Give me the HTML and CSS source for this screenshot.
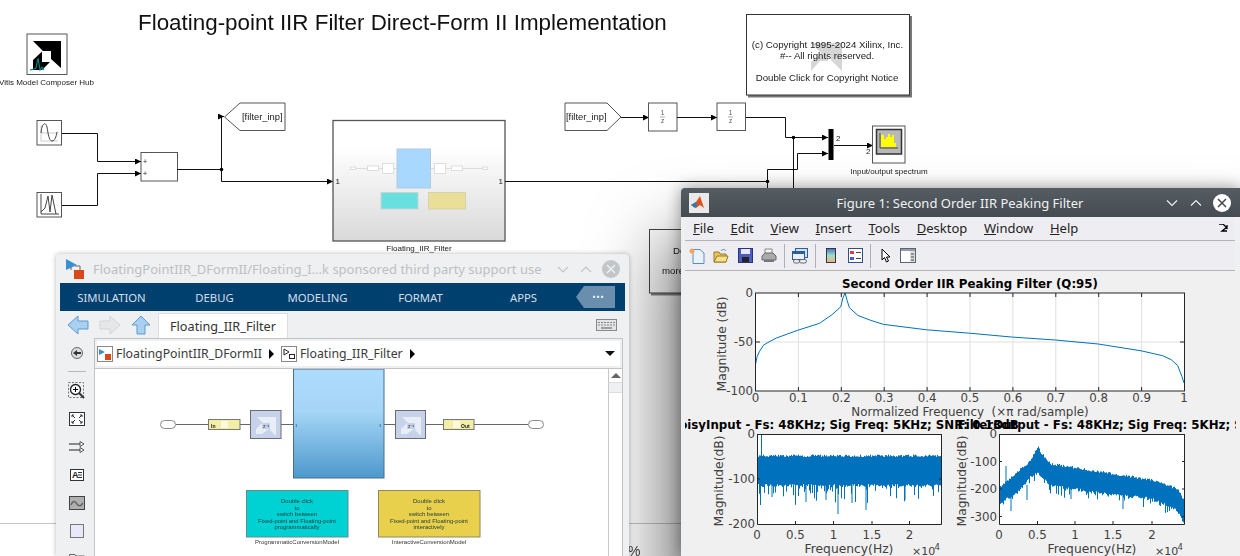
FILE: index.html
```html
<!DOCTYPE html>
<html lang="en">
<head>
<meta charset="utf-8">
<title>Floating-point IIR Filter Direct-Form II Implementation</title>
<link rel="stylesheet" href="styles.css">
</head>
<body>
<main class="desktop">
  <svg class="diagram" width="1240" height="556" viewBox="0 0 1240 556">
    <defs>
      <linearGradient id="subGrad" x1="0" y1="0" x2="0" y2="1">
        <stop offset="0" stop-color="#fff"/><stop offset=".22" stop-color="#fff"/><stop offset="1" stop-color="#d9d9d9"/>
      </linearGradient>
      <marker id="arw" markerWidth="7" markerHeight="6" refX="6" refY="3" orient="auto" markerUnits="userSpaceOnUse"><path d="M0 0L6 3L0 6Z" fill="#000"/></marker>
    </defs>
    <text class="d-title" x="138" y="30">Floating-point IIR Filter Direct-Form II Implementation</text>

    <rect class="blk" x="27" y="34" width="40" height="40.500"/>
    <path d="M33 41H61V68L51 59V51H43Z" fill="#000"/>
    <path d="M42 51.500L33 60V70H42L50 62H42Z" fill="#000"/>
    <path class="teal" d="M30 70L34 69L36 68L38 58L40 70L42 67L44 70"/>
    <text class="d-s" x="46.500" y="85" text-anchor="middle">Vitis Model Composer Hub</text>

    <rect class="blk" x="37" y="120.500" width="24.500" height="24.500"/>
    <path class="ico-soft" d="M41 125V141H58M41 133H58"/>
    <path class="ico" d="M41 133C42 122 46 122 47 127C48 133 49 141 52 141C55 141 56 137 57 132"/>
    <rect class="blk" x="37" y="192.500" width="24.500" height="24.500"/>
    <path class="ico" d="M41 194V214H59M41 212L45 208L48 196L50 212L52 195L56 214"/>

    <rect class="blk" x="141" y="152.500" width="36.500" height="28.500"/>
    <text class="d-p" x="143" y="164">+</text><text class="d-p" x="143" y="176">+</text>
    <path class="wire" marker-end="url(#arw)" d="M62 133.500H97.500V161.500H141"/>
    <path class="wire" marker-end="url(#arw)" d="M62 205.500H97.500V173.500H141"/>
    <path class="wire" marker-end="url(#arw)" d="M177 169.500H221.500V116.500H224"/>
    <path class="wire" marker-end="url(#arw)" d="M221.500 169.500V181.500H333"/>
    <circle cx="221.500" cy="169.500" r="1.800"/>
    <path class="blk" d="M224.500 117L240 103H285V130.500H240Z"/>
    <text class="d-m" x="242" y="120">[filter_inp]</text>

    <rect x="333" y="120.500" width="172" height="120.500" fill="url(#subGrad)" class="sub"/>
    <path class="thin" d="M350 168.500H367M379 168.500H382M393 168.500H397M431 168.500H434M446 168.500H451M463 168.500H483"/>
    <rect class="thin-b" x="350.500" y="167" width="5" height="2.500"/>
    <rect class="thin-b" x="367.500" y="166" width="11" height="4.500"/>
    <rect class="thin-b" x="382.500" y="163.500" width="11" height="10"/>
    <rect class="thin-b" x="434.500" y="163.500" width="11" height="10"/>
    <rect class="thin-b" x="451.500" y="166" width="11" height="4.500"/>
    <rect class="thin-b" x="482.500" y="167" width="5" height="2.500"/>
    <rect x="397" y="149" width="33.500" height="39" fill="#a8d8fe" stroke="#b2c9dc"/>
    <rect x="381" y="192.500" width="37" height="16.500" fill="#68e0e0" stroke="#c8d4d4"/>
    <rect x="428.500" y="192.500" width="37" height="16.500" fill="#eadf98" stroke="#d8d2a8"/>
    <text class="d-s" x="335.500" y="184">1</text><text class="d-s" x="498.500" y="184">1</text>
    <text class="d-s" x="419" y="250.500" text-anchor="middle">Floating_IIR_Filter</text>

    <path class="blk" d="M565 103H607L621 117L607 130.500H565Z"/>
    <text class="d-m" x="566" y="120">[filter_inp]</text>
    <path class="wire" marker-end="url(#arw)" d="M621 117.500H649"/>
    <rect class="blk" x="648.500" y="103" width="28.500" height="28"/>
    <text class="d-f" x="662.500" y="114.500" text-anchor="middle">1</text><path class="frac" d="M660 117H665"/><text class="d-f" x="662.500" y="123" text-anchor="middle">z</text>
    <path class="wire" marker-end="url(#arw)" d="M677 117.500H717"/>
    <rect class="blk" x="717" y="103" width="28.500" height="27.500"/>
    <text class="d-f" x="730.500" y="114.500" text-anchor="middle">1</text><path class="frac" d="M728 117H733"/><text class="d-f" x="730.500" y="123" text-anchor="middle">z</text>
    <path class="wire" marker-end="url(#arw)" d="M746 117.500H785.500V137.500H828"/>
    <path class="wire" d="M793.500 137.500V195"/>
    <circle cx="793.500" cy="137.500" r="1.800"/>
    <path class="wire" d="M505 181.500H768"/>
    <path class="wire" marker-end="url(#arw)" d="M767.500 195V169.500H797.500V153.500H828"/>
    <circle cx="767.500" cy="181.500" r="1.800"/>
    <rect x="828.500" y="129" width="5" height="31" fill="#000"/>
    <text class="d-s" x="836" y="141">2</text>
    <path class="wire" marker-end="url(#arw)" d="M834 145.500H873"/>
    <text class="d-s" x="866" y="154">2</text>
    <rect class="blk" x="872.500" y="126" width="32.500" height="37"/>
    <rect x="876.500" y="129.500" width="25" height="24.500" fill="#b8b8b8" stroke="#333" stroke-width="1.500"/>
    <path d="M881 147V134H882V135H884V139H886V137H888V134H890V137H892V135H894V143H896V147Z" fill="#ff0"/>
    <path class="ico" d="M880 133V148H898"/>
    <text class="d-s" x="889" y="174" text-anchor="middle">Input/output spectrum</text>

    <rect class="note" x="746.500" y="14.500" width="163" height="80.500"/>
    <path d="M811 43H842V71L831 60V54H822Z" fill="#d6d6d6"/>
    <path d="M820 55H828V61H820L811 71V62Z" fill="#d6d6d6"/>
    <text class="d-n" x="827.500" y="48" text-anchor="middle">(c) Copyright 1995-2024 Xilinx, Inc.</text>
    <text class="d-n" x="827" y="59" text-anchor="middle">#-- All rights reserved.</text>
    <text class="d-n" x="827" y="81" text-anchor="middle">Double Click for Copyright Notice</text>

    <rect class="note2" x="649.500" y="229.500" width="60" height="63.500"/>
    <text class="d-n" x="673" y="254">De</text>
    <text class="d-n" x="662" y="274">more</text>

    <path class="status" d="M0 523.500H60M629 523.500H690"/>
    <text class="d-pct" x="628" y="556">%</text>
  </svg>

  <section class="win win-model">
    <header class="titlebar">
      <svg class="app-ico" width="22" height="22" viewBox="0 0 22 22"><path d="M1 1L12 7L1 12Z" fill="#3a8fd0"/><path d="M6 9V12M10 8H15V12" fill="none" stroke="#666"/><rect x="9" y="12" width="10" height="9" fill="#d8481a"/></svg>
      <h1 class="title">FloatingPointIIR_DFormII/Floating_I...k sponsored third party support use</h1>
      <div class="winbtns">
        <svg width="14" height="14" viewBox="0 0 14 14"><path class="wb" d="M2 5L7 10L12 5"/></svg>
        <svg width="14" height="14" viewBox="0 0 14 14"><path class="wb" d="M2 10L7 5L12 10"/></svg>
        <svg width="18" height="18" viewBox="0 0 18 18"><circle cx="9" cy="9" r="9" fill="#c3c6c9"/><path d="M5 5L13 13M13 5L5 13" stroke="#eff0f1" stroke-width="1.500"/></svg>
      </div>
    </header>
    <nav class="ribbon">
      <span class="rtab">SIMULATION</span><span class="rtab">DEBUG</span><span class="rtab">MODELING</span><span class="rtab">FORMAT</span><span class="rtab">APPS</span>
      <span class="rmore">•••</span>
    </nav>
    <div class="navrow">
      <svg width="22" height="20" viewBox="0 0 22 20"><path class="arrow-on" d="M1 10L11 1V6H21V14H11V19Z"/></svg>
      <svg width="22" height="20" viewBox="0 0 22 20"><path class="arrow-off" d="M21 10L11 1V6H1V14H11V19Z"/></svg>
      <svg width="20" height="20" viewBox="0 0 20 20"><path class="arrow-on" d="M10 1L19 10H14V19H6V10H1Z"/></svg>
      <div class="doc-tab">Floating_IIR_Filter</div>
      <svg class="kbd" width="21" height="12" viewBox="0 0 21 12"><rect x=".5" y=".5" width="20" height="11" fill="#e4e4e4" stroke="#888"/><path d="M2 3.500H19M2 6H19" stroke="#888" stroke-dasharray="2 1"/><path d="M5 9H16" stroke="#888" stroke-width="1.500"/></svg>
    </div>
    <div class="modelbody">
      <aside class="lefttools">
        <svg class="first" width="14" height="14" viewBox="0 0 14 14"><circle cx="7" cy="7" r="5.500" fill="#ddd" stroke="#666"/><path d="M3 7L7 4V10ZM7 6H11V8H7Z" fill="#333"/></svg>
        <hr class="tsep">
        <span class="lt"><svg width="18" height="18" viewBox="0 0 18 18"><rect x=".5" y=".5" width="15" height="15" fill="none" stroke="#777" stroke-dasharray="2 1.500"/><circle cx="7.500" cy="7.500" r="5" fill="#fff" stroke="#222" stroke-width="1.300"/><path d="M5 7.500H10M7.500 5V10" stroke="#000"/><path d="M11 11L16 16" stroke="#333" stroke-width="2"/></svg></span>
        <span class="lt"><svg width="16" height="14" viewBox="0 0 16 14"><rect x=".5" y=".5" width="15" height="13" fill="#fff" stroke="#333"/><path d="M3 5V3H5M13 5V3H11M3 9V11H5M13 9V11H11M3 3L6 6M13 3L10 6M3 11L6 8M13 11L10 8" fill="none" stroke="#333"/></svg></span>
        <span class="lt"><svg width="16" height="12" viewBox="0 0 16 12"><path d="M0 3H11M0 9H11" stroke="#222"/><path d="M11 .5L15 3L11 5.500ZM11 6.500L15 9L11 11.500Z" fill="#fff" stroke="#555"/></svg></span>
        <span class="lt"><svg width="14" height="12" viewBox="0 0 14 12"><rect x=".5" y=".5" width="13" height="11" fill="#fff" stroke="#333"/><text class="ai" x="2" y="9">A</text><path d="M8 3.500H12M8 6H12M8 8.500H12" stroke="#333"/></svg></span>
        <span class="lt"><svg width="16" height="14" viewBox="0 0 16 14"><rect x=".5" y=".5" width="15" height="13" fill="#b0b0b0" stroke="#444"/><path d="M2 9C4 4 6 5 8 8C10 11 12 10 14 7" fill="none" stroke="#666" stroke-width="1.500"/></svg></span>
        <span class="lt"><svg width="14" height="14" viewBox="0 0 14 14"><rect x=".5" y=".5" width="13" height="13" fill="#e8e8fa" stroke="#777"/></svg></span>
        <span class="lt"><svg width="16" height="12" viewBox="0 0 16 12"><path d="M.5 11.500V1.500H6L7 3H15.500V11.500Z" fill="#eee" stroke="#666"/></svg></span>
      </aside>
      <div class="modelmain">
        <div class="address">
          <svg width="16" height="16" viewBox="0 0 16 16"><rect x=".5" y=".5" width="15" height="15" fill="#fff" stroke="#888"/><path d="M2 3L8 6L2 9Z" fill="#3a8fd0"/><rect x="8" y="8" width="6" height="6" fill="#d8481a"/></svg>
          <span class="crumb">FloatingPointIIR_DFormII</span>
          <i class="tri"></i>
          <svg width="16" height="16" viewBox="0 0 16 16"><rect x=".5" y=".5" width="15" height="15" fill="#fff" stroke="#888"/><path d="M3 3L8 6L3 9Z" fill="#fff" stroke="#222"/><rect x="8.500" y="8.500" width="5" height="4" fill="#fff" stroke="#222"/></svg>
          <span class="crumb">Floating_IIR_Filter</span>
          <i class="tri"></i>
          <i class="drop"></i>
        </div>
        <div class="viewport">
          <svg class="inner" width="513" height="187" viewBox="95 369 513 187">
            <defs>
              <linearGradient id="bigGrad" x1="0" y1="0" x2="0" y2="1"><stop offset="0" stop-color="#aedcff"/><stop offset=".4" stop-color="#a4d4f6"/><stop offset="1" stop-color="#4c98cc"/></linearGradient>
            </defs>
            <path class="iw" d="M176 424.500H208M240 424.500H250M281 424.500H293M384 424.500H395M425 424.500H443M474 424.500H528"/>
            <rect class="pill" x="160.500" y="420.500" width="15" height="8" rx="4"/>
            <rect class="pill" x="528.500" y="420.500" width="15" height="8" rx="4"/>
            <rect class="gw" x="208.500" y="419.500" width="31.500" height="10"/>
            <rect class="gw2" x="221" y="421" width="7" height="7"/>
            <text class="i-b" x="211" y="428">In</text>
            <rect class="gw" x="443.500" y="419.500" width="30.500" height="10"/>
            <rect class="gw2" x="453" y="421" width="7" height="7"/>
            <text class="i-b" x="461" y="428">Out</text>
            <rect class="dsp" x="250.500" y="410.500" width="30.500" height="28"/>
            <path class="dspw" d="M257 417H276V436L270 430V423H263ZM262 423L256 429V434H262L269 429H262Z"/>
            <text class="i-x" x="263" y="428">z⁻¹</text>
            <rect class="dsp" x="395.500" y="410.500" width="30" height="28"/>
            <path class="dspw" d="M402 417H421V436L415 430V423H408ZM407 423L401 429V434H407L414 429H407Z"/>
            <text class="i-x" x="408" y="428">z⁻¹</text>
            <rect x="293.500" y="369" width="90.500" height="109" fill="url(#bigGrad)" stroke="#4a6f8c"/>
            <text class="i-p" x="295" y="427">1</text><text class="i-p" x="379" y="427">1</text>
            <rect class="cy" x="246.500" y="490.500" width="101.500" height="46.500"/>
            <text class="i-t" x="297" y="503" text-anchor="middle">Double click</text>
            <text class="i-t" x="297" y="510" text-anchor="middle">to</text>
            <text class="i-t" x="297" y="516" text-anchor="middle">switch between</text>
            <text class="i-t" x="297" y="523" text-anchor="middle">Fixed-point and Floating-point</text>
            <text class="i-t" x="297" y="529" text-anchor="middle">programmatically</text>
            <text class="i-l" x="297" y="544" text-anchor="middle">ProgrammaticConversionModel</text>
            <rect class="ye" x="378.500" y="490.500" width="101.500" height="46.500"/>
            <text class="i-t" x="429" y="503" text-anchor="middle">Double click</text>
            <text class="i-t" x="429" y="510" text-anchor="middle">to</text>
            <text class="i-t" x="429" y="516" text-anchor="middle">switch between</text>
            <text class="i-t" x="429" y="523" text-anchor="middle">Fixed-point and Floating-point</text>
            <text class="i-t" x="429" y="529" text-anchor="middle">interactively</text>
            <text class="i-l" x="429" y="544" text-anchor="middle">InteractiveConversionModel</text>
          </svg>
          <div class="scrollbar"><i class="sb-up"></i><i class="sb-thumb"></i></div>
        </div>
      </div>
    </div>
  </section>

  <section class="win win-fig">
    <header class="figtitle">
      <svg class="fig-ico" width="20" height="20" viewBox="0 0 20 20"><rect width="20" height="20" fill="#e9e9e9"/><path d="M2 12L7 9L11 3L15 15L11 12L7 15Z" fill="#d9541e"/><path d="M2 12L7 9L8 13L6 15Z" fill="#2b7bb9"/></svg>
      <h2 class="figname">Figure 1: Second Order IIR Peaking Filter</h2>
      <div class="figbtns">
        <svg width="14" height="14" viewBox="0 0 14 14"><path class="fb" d="M2 4.500L7 9.500L12 4.500"/></svg>
        <svg width="14" height="14" viewBox="0 0 14 14"><path class="fb" d="M2 9.500L7 4.500L12 9.500"/></svg>
        <svg width="18" height="18" viewBox="0 0 18 18"><circle cx="9" cy="9" r="9" fill="#fff"/><path d="M5 5L13 13M13 5L5 13" stroke="#41484e" stroke-width="1.500"/></svg>
      </div>
    </header>
    <nav class="menubar">
      <span class="mi"><u>F</u>ile</span><span class="mi"><u>E</u>dit</span><span class="mi"><u>V</u>iew</span><span class="mi"><u>I</u>nsert</span><span class="mi"><u>T</u>ools</span><span class="mi"><u>D</u>esktop</span><span class="mi"><u>W</u>indow</span><span class="mi"><u>H</u>elp</span>
      <svg class="dock" width="9" height="8" viewBox="0 0 9 8"><path d="M0 0H4L8 4V1M8 7H3L8 3" fill="none" stroke="#000" stroke-width="1.300"/></svg>
    </nav>
    <div class="toolbar">
      <span class="tb"><svg width="17" height="16" viewBox="0 0 17 16"><path d="M4 1.500H11L15 5V15.500H4Z" fill="#e8f2fb" stroke="#5c8fb8"/><circle cx="3" cy="3" r="2.500" fill="#f7a35a"/></svg></span>
      <span class="tb"><svg width="16" height="15" viewBox="0 0 16 15"><path d="M1 4H6L7 6H13V14H1Z" fill="#e6c660" stroke="#9a7a20"/><path d="M1 14L4 8H15L13 14Z" fill="#f6e08e" stroke="#9a7a20"/><path d="M8 3C9 1 12 1 13 3" fill="none" stroke="#4a8ac0"/></svg></span>
      <span class="tb"><svg width="15" height="15" viewBox="0 0 15 15"><rect x=".5" y=".5" width="14" height="14" fill="#4d5cc0" stroke="#2a3280"/><rect x="3" y="1" width="9" height="5" fill="#e8e8f8"/><rect x="4" y="9" width="7" height="5" fill="#222"/></svg></span>
      <span class="tb"><svg width="16" height="15" viewBox="0 0 16 15"><path d="M4 1H11V6H4Z" fill="#f4f4f4" stroke="#888"/><path d="M1 8L4 5H12L15 8V12H1Z" fill="#aaa" stroke="#666"/><path d="M3 12H13V14H3Z" fill="#777"/></svg></span>
      <i class="tsepv"></i>
      <span class="tb"><svg width="16" height="16" viewBox="0 0 16 16"><rect x="3.500" y=".5" width="12" height="9" fill="#cfe0f2" stroke="#2f5f90"/><rect x=".5" y="3.500" width="12" height="8" fill="#e8f1fa" stroke="#2f5f90"/><path d="M1 5H12" stroke="#2f5f90" stroke-width="2"/><rect x="1.500" y="11.500" width="6" height="3.500" rx="1.700" fill="none" stroke="#667"/><rect x="7.500" y="11.500" width="7" height="3.500" rx="1.700" fill="none" stroke="#667"/></svg></span>
      <i class="tsepv"></i>
      <span class="tb"><svg width="10" height="15" viewBox="0 0 10 15"><defs><linearGradient id="cb" x1="0" y1="0" x2="0" y2="1"><stop offset="0" stop-color="#4a6fd0"/><stop offset=".5" stop-color="#a0e0c0"/><stop offset="1" stop-color="#f0b080"/></linearGradient></defs><rect x=".5" y=".5" width="9" height="14" fill="url(#cb)" stroke="#334"/></svg></span>
      <span class="tb"><svg width="15" height="15" viewBox="0 0 15 15"><rect x=".5" y=".5" width="14" height="14" fill="#fff" stroke="#334d88"/><rect x="2" y="3" width="4" height="3" fill="#d84040"/><rect x="2" y="9" width="4" height="3" fill="#4a5ed0"/><path d="M8 4.500H13M8 10.500H13" stroke="#444"/></svg></span>
      <i class="tsepv"></i>
      <span class="tb"><svg width="10" height="15" viewBox="0 0 10 15"><path d="M1 1V12L3.500 9.500L5.500 14L7.500 13L5.500 9H9Z" fill="#fff" stroke="#000"/></svg></span>
      <span class="tb tb-l"><svg width="16" height="15" viewBox="0 0 16 15"><rect x=".5" y=".5" width="15" height="14" fill="#fff" stroke="#567"/><rect x="1" y="1" width="14" height="2" fill="#99a"/><rect x="10" y="3" width="5" height="11" fill="#ddd"/><path d="M11 6H14M11 9H14M11 12H14" stroke="#444"/></svg></span>
    </div>
    <div class="figure">
      <svg class="plots" width="551" height="285" viewBox="685 271 551 285">
        <rect class="axbg" x="755.500" y="293" width="429" height="98"/>
        <path class="grid" d="M798.400 293V391M841.300 293V391M884.200 293V391M927.100 293V391M970 293V391M1012.900 293V391M1055.800 293V391M1098.700 293V391M1141.600 293V391M755.500 342H1184"/>
        <path class="curve" d="M755.500 364.500L757.100 356.700L759.300 351.800L763.600 345L767.900 342.500L776.500 338L797.900 330.200L819.400 323.400L832.200 314.600L840.800 306.700L842.900 298L845.100 293L847.200 300.800L849.400 307.700L858 315.500L870.800 320.400L883.700 324.400L926.600 329.800L969.500 333.200L1012.400 337.100L1055.300 340L1098.200 344L1141.100 350.800L1162.600 355.700L1171.100 359.600L1177.600 365.500L1181.900 376.300L1184 383"/>
        <rect class="axbox" x="755.500" y="293" width="429" height="98"/>
        <path class="axbox" d="M798.400 391V387M841.300 391V387M884.200 391V387M927.100 391V387M970 391V387M1012.900 391V387M1055.800 391V387M1098.700 391V387M1141.600 391V387M798.400 293V297M841.300 293V297M884.200 293V297M927.100 293V297M970 293V297M1012.900 293V297M1055.800 293V297M1098.700 293V297M1141.600 293V297M755.500 342H760M1184 342H1180"/>
        <text class="p-title" x="970" y="288" text-anchor="middle">Second Order IIR Peaking Filter (Q:95)</text>
        <text class="p-t" x="753" y="297" text-anchor="end">0</text>
        <text class="p-t" x="753" y="346" text-anchor="end">-50</text>
        <text class="p-t" x="753" y="395" text-anchor="end">-100</text>
        <text class="p-t" x="755.500" y="402" text-anchor="middle">0</text>
        <text class="p-t" x="798.400" y="402" text-anchor="middle">0.1</text>
        <text class="p-t" x="841.300" y="402" text-anchor="middle">0.2</text>
        <text class="p-t" x="884.200" y="402" text-anchor="middle">0.3</text>
        <text class="p-t" x="927.100" y="402" text-anchor="middle">0.4</text>
        <text class="p-t" x="970" y="402" text-anchor="middle">0.5</text>
        <text class="p-t" x="1012.900" y="402" text-anchor="middle">0.6</text>
        <text class="p-t" x="1055.800" y="402" text-anchor="middle">0.7</text>
        <text class="p-t" x="1098.700" y="402" text-anchor="middle">0.8</text>
        <text class="p-t" x="1141.600" y="402" text-anchor="middle">0.9</text>
        <text class="p-t" x="1184" y="402" text-anchor="middle">1</text>
        <text class="p-x" x="970" y="416" text-anchor="middle">Normalized Frequency &#160;(×π rad/sample)</text>
        <text class="p-l" transform="translate(726 344) rotate(-90)" text-anchor="middle">Magnitude (dB)</text>

        <rect class="axbg" x="757.500" y="434" width="184" height="90"/>
        <path id="noiseA" class="noise" d=""/>
        <path class="axonly" d="M757.500 434V524.500H941.500M941.500 434V524.500M757.500 434.500H941.500M795.500 524V521M833.500 524V521M872 524V521M909.500 524V521M757.500 479H760M941.500 479H939"/>
        <text class="p-title" x="844" y="429" text-anchor="middle">NoisyInput - Fs: 48KHz; Sig Freq: 5KHz; SNR: 0.13dB</text>
        <text class="p-t" x="755" y="438" text-anchor="end">0</text>
        <text class="p-t" x="755" y="483" text-anchor="end">-100</text>
        <text class="p-t" x="755" y="528" text-anchor="end">-200</text>
        <text class="p-t" x="757" y="539" text-anchor="middle">0</text>
        <text class="p-t" x="795.500" y="539" text-anchor="middle">0.5</text>
        <text class="p-t" x="833.500" y="539" text-anchor="middle">1</text>
        <text class="p-t" x="872" y="539" text-anchor="middle">1.5</text>
        <text class="p-t" x="909.500" y="539" text-anchor="middle">2</text>
        <text class="p-l" x="849" y="553" text-anchor="middle">Frequency(Hz)</text>
        <text class="p-e" x="912" y="555">×10</text><text class="p-sup" x="934.500" y="550">4</text>
        <text class="p-l" transform="translate(723 481) rotate(-90)" text-anchor="middle">Magnitude(dB)</text>

        <rect class="axbg" x="999.500" y="434" width="185" height="90"/>
        <path id="noiseB" class="noise" d=""/>
        <path class="axonly" d="M999.500 434V524.500H1184.500M1184.500 434V524.500M999.500 434.500H1184.500M1037.500 524V521M1075 524V521M1113 524V521M1152 524V521M999.500 461.500H1002M999.500 489H1002M999.500 516.500H1002M1184.500 461.500H1182M1184.500 489H1182M1184.500 516.500H1182"/>
        <text class="p-title" x="1131" y="429" text-anchor="middle">FilterOutput - Fs: 48KHz; Sig Freq: 5KHz; SNR: 13dB</text>
        <text class="p-t" x="997" y="438" text-anchor="end">0</text>
        <text class="p-t" x="997" y="465.500" text-anchor="end">-100</text>
        <text class="p-t" x="997" y="493" text-anchor="end">-200</text>
        <text class="p-t" x="997" y="520.500" text-anchor="end">-300</text>
        <text class="p-t" x="999" y="539" text-anchor="middle">0</text>
        <text class="p-t" x="1037.500" y="539" text-anchor="middle">0.5</text>
        <text class="p-t" x="1075" y="539" text-anchor="middle">1</text>
        <text class="p-t" x="1113" y="539" text-anchor="middle">1.5</text>
        <text class="p-t" x="1152" y="539" text-anchor="middle">2</text>
        <text class="p-l" x="1092" y="553" text-anchor="middle">Frequency(Hz)</text>
        <text class="p-e" x="1155" y="555">×10</text><text class="p-sup" x="1177.500" y="550">4</text>
        <text class="p-l" transform="translate(966 481) rotate(-90)" text-anchor="middle">Magnitude(dB)</text>
      </svg>
    </div>
  </section>
</main>
<script src="script.js"></script>
</body>
</html>
```
FILE: styles.css
```css
* { box-sizing: border-box; }
html, body { margin: 0; padding: 0; }
body { width: 1240px; height: 556px; overflow: hidden; background: #fff; font-family: "Noto Sans", sans-serif; }
svg { display: block; }
.desktop { position: relative; width: 1240px; height: 556px; overflow: hidden; background: #fff; }

/* background Simulink diagram */
.diagram { position: absolute; left: 0; top: 0; filter: blur(.3px); }
.diagram text { font-family: "Liberation Sans", sans-serif; fill: #1a1a1a; }
.diagram .d-title { font-size: 22.400px; fill: #111; }
.diagram .d-s { font-size: 8px; }
.diagram .d-m { font-size: 9.400px; }
.diagram .d-p { font-size: 7px; }
.diagram .d-f { font-size: 6.500px; fill: #555; }
.diagram .d-n { font-size: 9.700px; }
.diagram .d-pct { font-size: 14px; fill: #444; }
.blk { fill: #fff; stroke: #555; stroke-width: 1; }
.sub { stroke: #555; stroke-width: 1.300; }
.note { fill: #fff; stroke: #333; filter: drop-shadow(2px 2px 0 #777); }
.note2 { fill: #fff; stroke: #444; filter: drop-shadow(2px 2px 0 #888); }
.wire { fill: none; stroke: #111; stroke-width: 1; }
.ico { fill: none; stroke: #444; stroke-width: 1; }
.ico-soft { fill: none; stroke: #ccc; stroke-width: 1; }
.teal { fill: none; stroke: #0e8080; stroke-width: 1.200; }
.thin { fill: none; stroke: #ddd; }
.thin-b { fill: #fff; stroke: #ddd; }
.frac { stroke: #777; stroke-width: .6; }
.status { stroke: #c4c4c4; fill: none; }

/* windows: they float on a free desktop */
.win { position: absolute; display: flex; flex-direction: column; overflow: hidden; }

.win-model { z-index: 1; left: 56px; top: 254px; width: 573px; height: 302px; padding: 0 4px; background: #eff0f1; border-radius: 4px 4px 0 0; box-shadow: 0 0 5px rgba(0,0,0,.28); }
.titlebar { flex: none; display: flex; align-items: center; height: 29px; padding-left: 5px; }
.app-ico { flex: none; margin: 0 6px 0 0; }
.title { flex: 1; margin: 0; font-size: 13px; font-weight: 400; color: #bdc0c2; white-space: nowrap; overflow: hidden; }
.winbtns { flex: none; display: flex; align-items: center; gap: 9px; padding-right: 5px; }
.wb { fill: none; stroke: #c3c6c9; stroke-width: 1.100; }

.ribbon { flex: none; display: flex; align-items: center; height: 28px; background: #00406f; color: #d4dfea; font-size: 11.300px; }
.rtab { width: 103px; text-align: center; }
.rmore { margin-left: 1px; width: 39px; height: 22px; background: #6a8fae; color: #fff; font-size: 8px; line-height: 22px; text-align: center; padding-left: 6px; letter-spacing: 1px; clip-path: polygon(8px 0, 100% 0, 100% 100%, 8px 100%, 0 50%); }

.navrow { flex: none; display: flex; align-items: center; height: 27px; padding-left: 7px; gap: 10px; }
.doc-tab { align-self: flex-end; height: 25px; width: 130px; margin-left: -3px; background: #fff; border: 1px solid #dcdde0; border-bottom: 0; font-size: 12.700px; line-height: 24px; text-align: center; color: #333; }
.kbd { margin-left: auto; margin-right: 8px; }
.arrow-on { fill: #a9d0f0; stroke: #5a9bd0; }
.arrow-off { fill: #e6e7e8; stroke: #d4d5d6; }

.modelbody { flex: 1; min-height: 0; display: flex; }
.lefttools { flex: none; width: 34px; display: flex; flex-direction: column; align-items: center; padding-top: 8px; }
.lefttools .first { flex: none; margin-bottom: 11px; }
.lt { flex: none; height: 28px; display: flex; align-items: center; justify-content: center; }
.tsep { flex: none; width: 18px; height: 1px; margin: 0 0 5px; border: 0; background: #b8b8b8; }
.ai { font: 700 9px "Liberation Sans", sans-serif; fill: #222; }

.modelmain { flex: 1; min-width: 0; display: flex; flex-direction: column; margin-right: 2px; border: 1px solid #c2c3c4; border-bottom: 0; }
.address { flex: none; display: flex; align-items: center; gap: 3px; height: 29px; padding: 2px 5px 2px 0; border: 2px solid #eff0f1; background: #fff; background-clip: padding-box; }
.crumb { font-size: 12.300px; color: #3a3a3a; white-space: nowrap; }
.tri { width: 0; height: 0; margin: 0 4px; border-left: 5px solid #000; border-top: 5px solid transparent; border-bottom: 5px solid transparent; }
.drop { width: 0; height: 0; margin-left: auto; border-top: 5px solid #111; border-left: 5px solid transparent; border-right: 5px solid transparent; }

.viewport { flex: 1; min-height: 0; display: flex; background: #fff; border-top: 1px solid #c2c3c4; }
.inner { flex: none; filter: blur(.25px); }
.scrollbar { flex: 1; display: flex; flex-direction: column; align-items: center; background: #fff; border-left: 1px solid #c8c8c8; }
.sb-up { flex: none; width: 0; height: 0; margin: 4px 0 4px; border-bottom: 5px solid #666; border-left: 5px solid transparent; border-right: 5px solid transparent; }
.sb-thumb { flex: none; width: 100%; height: 11px; background: #eff0f1; border-top: 1px solid #ddd; border-bottom: 1px solid #ddd; }
.iw { fill: none; stroke: #666; }
.pill { fill: #fff; stroke: #888; }
.gw { fill: #f2eea6; stroke: #777; }
.gw2 { fill: #fbf9e0; }
.dsp { fill: #c6d2ea; stroke: #6c6c6c; }
.dspw { fill: #e8edf6; }
.cy { fill: #00d2d4; stroke: #6a8a8a; }
.ye { fill: #e8cf4c; stroke: #8a8a66; }
.inner text { font-family: "Liberation Sans", sans-serif; fill: #1a3a3a; }
.inner .i-t { font-size: 5.900px; }
.inner .i-l { font-size: 6px; fill: #333; }
.inner .i-b { font-size: 5px; font-weight: 700; fill: #222; }
.inner .i-x { font-size: 5px; fill: #333; }
.inner .i-p { font-size: 4px; fill: #333; }

/* figure window */
.win-fig { left: 681px; top: 188px; width: 559px; height: 368px; background: #eff0f1; box-shadow: 0 0 16px rgba(0,0,0,.4), 0 70px 70px 20px rgba(0,0,0,.5); border-radius: 4px 0 0 0; }
.figtitle { flex: none; display: flex; align-items: center; height: 29px; padding-left: 8px; background: linear-gradient(#555c62, #444b51); color: #f0f2f3; }
.fig-ico { flex: none; }
.figname { flex: 1; margin: 0; padding-left: 46px; font-size: 13px; font-weight: 400; text-align: center; white-space: nowrap; }
.figbtns { flex: none; display: flex; align-items: center; gap: 10px; padding-right: 9px; }
.fb { fill: none; stroke: #f0f2f3; stroke-width: 1.100; }
.menubar { flex: none; display: flex; align-items: center; height: 24px; margin: 0 5px 0 4px; padding: 0 0 2px 8px; gap: 16.700px; background: #eeeef2; border-bottom: 1px solid #b4b4b4; font-size: 13px; color: #222; }
.dock { margin-left: auto; margin-right: 7px; }
.toolbar { flex: none; display: flex; align-items: center; height: 30px; margin: 0 5px 0 4px; background: #eeeef2; border-bottom: 1px solid #b4b4b4; }
.tb { width: 24px; display: flex; justify-content: center; }
.tb-l { margin-left: -2px; }
.tsepv { width: 1px; height: 24px; margin: 0 3px; background: #b0b0b0; }
.figure { flex: 1; min-height: 0; margin: 0 0 0 4px; background: #f0f0f0; overflow: hidden; }
.plots { overflow: hidden; }
.plots text { font-family: "DejaVu Sans", sans-serif; fill: #404040; }
.plots .p-title { font-size: 11.800px; font-weight: 700; fill: #000; }
.plots .p-t { font-size: 11.800px; }
.plots .p-e { font-size: 11px; }
.plots .p-sup { font-size: 8.500px; }
.plots .p-l { font-size: 12.300px; }
.plots .p-x { font-size: 11.900px; }
.axbg { fill: #fff; }
.grid { fill: none; stroke: #e0e0e0; }
.axbox { fill: none; stroke: #262626; }
.axonly { fill: none; stroke: #262626; }
.curve { fill: none; stroke: #0072bd; stroke-width: 1; }
.noise { fill: none; stroke: #0072bd; stroke-width: 1; }
```
FILE: script.js
```js
// Spectrum plots: deterministic pseudo-random magnitude spikes.
(function () {
  var seed = 12345;
  function rnd() {
    seed = (seed * 1664525 + 1013904223) % 4294967296;
    return seed / 4294967296;
  }
  function lerp(table, x) {
    for (var i = 1; i < table.length; i++) {
      if (x <= table[i][0]) {
        var a = table[i - 1], b = table[i];
        var t = (x - a[0]) / (b[0] - a[0]);
        return [a[1] + (b[1] - a[1]) * t, a[2] + (b[2] - a[2]) * t];
      }
    }
    var l = table[table.length - 1];
    return [l[1], l[2]];
  }
  function build(x0, x1, table, maxDrop, limit) {
    var d = '';
    for (var x = x0; x <= x1; x += 1) {
      var e = lerp(table, x);
      var top = e[0] - rnd() * 2.5;
      var bot = e[1] + rnd() * 3;
      if (rnd() < 0.35) bot += rnd() * rnd() * maxDrop;
      if (bot > limit) bot = limit;
      d += 'M' + (x + 0.5) + ' ' + top.toFixed(1) + 'V' + bot.toFixed(1);
    }
    return d;
  }
  var a = build(758, 941, [[757, 457, 484], [941, 457, 484]], 26, 524);
  a += 'M761.500 434V458M772 456V497M806 470V502M838 478V514M866 478V510M852 480V503M826 480V500M905 480V500';
  document.getElementById('noiseA').setAttribute('d', a);
  var b = build(1000, 1184, [
    [999, 489, 502], [1017, 473, 491], [1030, 462, 476], [1036, 451, 472], [1037.5, 448, 470],
    [1040, 453, 474], [1050, 465, 484], [1100, 473, 492], [1150, 481, 497], [1177, 490, 509], [1184, 502, 524]
  ], 13, 524);
  b += 'M1006 466V492M1011 490V511M1027 485V500M1071 485V499M1123 490V509';
  document.getElementById('noiseB').setAttribute('d', b);
})();
```
